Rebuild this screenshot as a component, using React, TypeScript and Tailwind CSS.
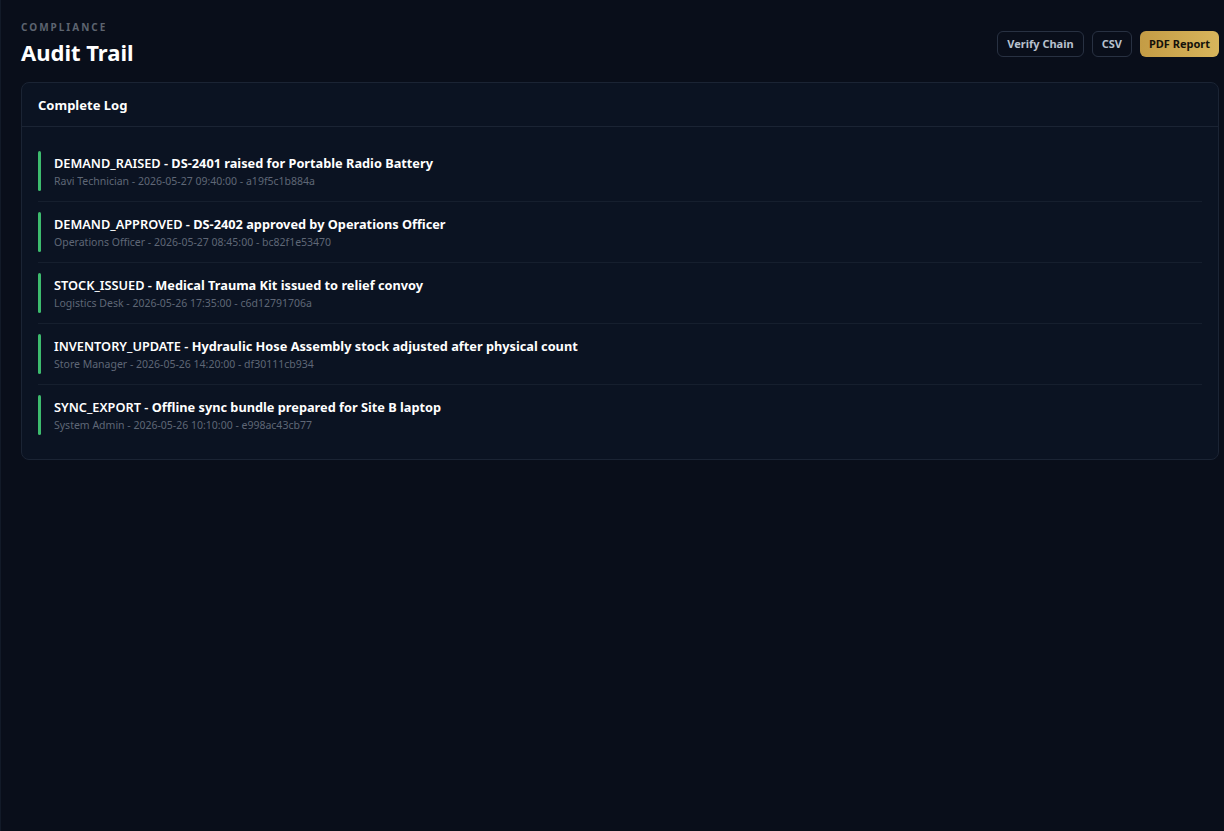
const entries = [
  {
    type: "DEMAND_RAISED",
    text: "DS-2401 raised for Portable Radio Battery",
    actor: "Ravi Technician",
    at: "2026-05-27 09:40:00",
    hash: "a19f5c1b884a",
  },
  {
    type: "DEMAND_APPROVED",
    text: "DS-2402 approved by Operations Officer",
    actor: "Operations Officer",
    at: "2026-05-27 08:45:00",
    hash: "bc82f1e53470",
  },
  {
    type: "STOCK_ISSUED",
    text: "Medical Trauma Kit issued to relief convoy",
    actor: "Logistics Desk",
    at: "2026-05-26 17:35:00",
    hash: "c6d12791706a",
  },
  {
    type: "INVENTORY_UPDATE",
    text: "Hydraulic Hose Assembly stock adjusted after physical count",
    actor: "Store Manager",
    at: "2026-05-26 14:20:00",
    hash: "df30111cb934",
  },
  {
    type: "SYNC_EXPORT",
    text: "Offline sync bundle prepared for Site B laptop",
    actor: "System Admin",
    at: "2026-05-26 10:10:00",
    hash: "e998ac43cb77",
  },
];

const LogRow = ({ entry, last }: { entry: (typeof entries)[number]; last: boolean }) => (
  <div className={`flex gap-[13px] py-2.5 ${last ? "" : "border-b border-[#161f2e]"}`}>
    <div className="w-[3px] shrink-0 rounded-full bg-[#3dbb6e]" />
    <div className="py-0.5">
      <div className="text-[12.75px] leading-5 text-white">
        <span className="font-semibold">{entry.type} - </span>
        <span className="font-bold">{entry.text}</span>
      </div>
      <div className="text-[10.5px] leading-4 text-[#5f6776]">
        {entry.actor} - {entry.at} - {entry.hash}
      </div>
    </div>
  </div>
);

export default function App() {
  return (
    <div
      className="min-h-screen bg-[#090e1a] border-l border-[#121a28] pl-5 pr-[5px] pt-5 text-white"
      style={{ fontFamily: '"Noto Sans", "Segoe UI", sans-serif' }}
    >
      <div className="mb-4 flex items-center justify-between">
        <div>
          <div className="text-[10px] font-bold uppercase leading-[14px] tracking-[0.2em] text-[#5d6470]">
            Compliance
          </div>
          <h1 className="mt-1 text-[22px] font-bold leading-7">Audit Trail</h1>
        </div>
        <div className="flex items-center gap-2 pt-[2px]">
          <button className="h-[26px] rounded-md border border-[#283142] px-[9px] text-[11px] font-bold text-[#b8c1ce]">
            Verify Chain
          </button>
          <button className="h-[26px] rounded-md border border-[#283142] px-[9px] text-[11px] font-bold text-[#b8c1ce]">
            CSV
          </button>
          <button className="h-[26px] rounded-md bg-gradient-to-r from-[#c49c45] to-[#d8b55c] px-[9px] text-[11px] font-bold text-[#14110a]">
            PDF Report
          </button>
        </div>
      </div>

      <div className="rounded-lg border border-[#1b2434] bg-[#0b1322]">
        <div className="flex h-11 items-center border-b border-[#1b2434] px-4 pt-0.5 text-[13px] font-bold">
          Complete Log
        </div>
        <div className="px-4 py-3.5">
          {entries.map((e, i) => (
            <LogRow key={e.hash} entry={e} last={i === entries.length - 1} />
          ))}
        </div>
      </div>
    </div>
  );
}
